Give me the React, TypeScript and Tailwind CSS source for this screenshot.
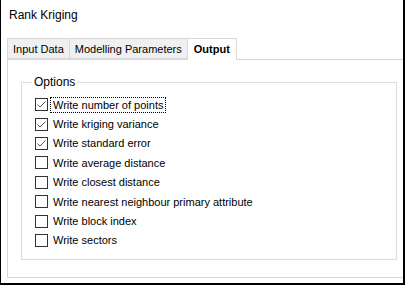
import { useState } from "react";

const options = [
  { label: "Write number of points", checked: true, focused: true },
  { label: "Write kriging variance", checked: true },
  { label: "Write standard error", checked: true },
  { label: "Write average distance", checked: false },
  { label: "Write closest distance", checked: false },
  { label: "Write nearest neighbour primary attribute", checked: false },
  { label: "Write block index", checked: false },
  { label: "Write sectors", checked: false },
];

const tabs = ["Input Data", "Modelling Parameters", "Output"];

function CheckBox({ checked }: { checked: boolean }) {
  return (
    <span className="w-[13px] h-[13px] border border-[#333333] bg-white flex items-center justify-center shrink-0">
      {checked && (
        <svg width="11" height="11" viewBox="0 0 11 11" fill="none">
          <path d="M1.5 5.5 L4 8 L9.5 2.5" stroke="#555555" strokeWidth="1" />
        </svg>
      )}
    </span>
  );
}

export default function App() {
  const [values, setValues] = useState(options.map((o) => o.checked));
  const active = 2;

  return (
    <div
      className="w-[405px] h-[285px] bg-white border-l border-r-2 border-b-2 border-black overflow-hidden text-[11px] text-black"
      style={{ fontFamily: '"Segoe UI", "Liberation Sans", Arial, sans-serif' }}
    >
      <div className="pl-[8px] pt-[7px] h-[38px] leading-[16px] text-[12px]">Rank Kriging</div>

      <div className="pl-[6px]">
        {/* tab strip */}
        <div className="flex items-end h-[21px] text-[12px]">
          {tabs.map((t, i) =>
            i === active ? (
              <div
                key={t}
                className="h-[22px] -mb-px px-[6px] bg-white border border-b-0 border-[#d9d9d9] font-bold leading-[20px] relative z-10 text-[11px]"
              >
                {t}
              </div>
            ) : (
              <div
                key={t}
                className="h-[21px] px-[5px] bg-[#f0f0f0] border border-[#d9d9d9] border-r-0 leading-[20px] text-[11px]"
              >
                {t}
              </div>
            )
          )}
        </div>

        {/* tab panel */}
        <div className="w-[410px] h-[219px] border border-[#d9d9d9] pl-[13px] pt-[14px]">
          <fieldset className="w-[376px] h-[186px] border border-[#dcdcdc] pl-[13px] pt-[4px] m-0">
            <legend className="ml-[-3px] px-[2px] leading-[16px] text-[12px]">Options</legend>
            <div className="flex flex-col mt-[1px]">
              {options.map((o, i) => (
                <label
                  key={o.label}
                  className="h-[19.4px] flex items-center gap-[3px] cursor-default"
                  onClick={() =>
                    setValues((v) => v.map((x, j) => (j === i ? !x : x)))
                  }
                >
                  <CheckBox checked={values[i]} />
                  <span
                    className={
                      o.focused
                        ? "px-[2px] leading-[14px] outline outline-1 outline-dotted outline-black"
                        : "px-[2px] leading-[14px]"
                    }
                  >
                    {o.label}
                  </span>
                </label>
              ))}
            </div>
          </fieldset>
        </div>
      </div>
    </div>
  );
}
